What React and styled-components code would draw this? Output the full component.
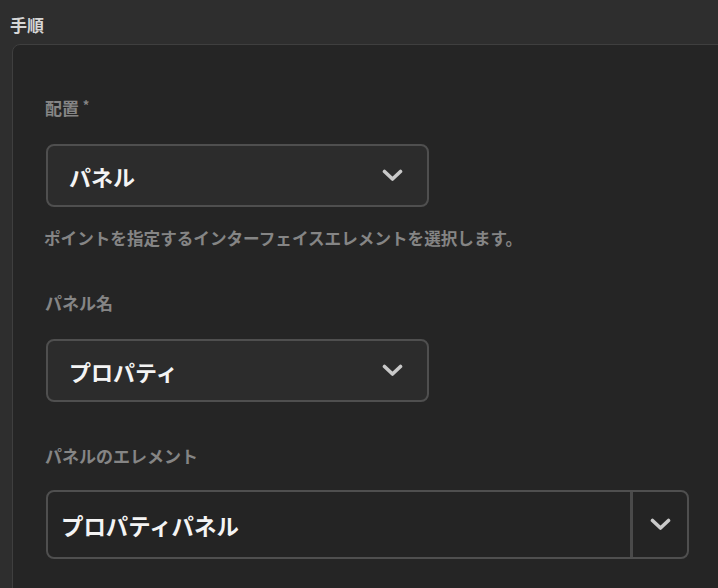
import React from 'react'
import styled, { createGlobalStyle } from 'styled-components'

const GlobalStyle = createGlobalStyle`
    html, body {
        margin: 0;
        padding: 0;
        background-color: #2e2e2e;
        overflow: hidden;
    }
    body {
        font-family: "Noto Sans CJK JP", "Noto Sans", sans-serif;
    }
`

function Chevron() {
    return (
        <svg width="21" height="13" viewBox="0 0 21 13">
            <polyline
                points="2.5,2.5 10.5,10 18.5,2.5"
                fill="none"
                stroke="#c9c9c9"
                strokeWidth="3.6"
                strokeLinecap="round"
                strokeLinejoin="round"
            />
        </svg>
    )
}

function App() {
    return (
        <StPage>
            <GlobalStyle />
            <StHeading>手順</StHeading>
            <StPanel>
                <StField>
                    <StLabel>配置 <StRequired>*</StRequired></StLabel>
                    <StSelect>
                        <StValue>パネル</StValue>
                        <Chevron />
                    </StSelect>
                    <StHelp>ポイントを指定するインターフェイスエレメントを選択します。</StHelp>
                </StField>
                <StField>
                    <StLabel>パネル名</StLabel>
                    <StSelect>
                        <StValue>プロパティ</StValue>
                        <Chevron />
                    </StSelect>
                </StField>
                <StField>
                    <StLabel>パネルのエレメント</StLabel>
                    <StCombo>
                        <StComboInput>プロパティパネル</StComboInput>
                        <StComboButton>
                            <Chevron />
                        </StComboButton>
                    </StCombo>
                </StField>
            </StPanel>
        </StPage>
    )
}

export default App

const StPage = styled.div`
    width: 718px;
    height: 588px;
    padding-top: 13px;
    box-sizing: border-box;
    overflow: hidden;
`

const StHeading = styled.div`
    margin-left: 10px;
    font-size: 17px;
    line-height: 24px;
    font-weight: 700;
    color: #d6d6d6;
`

const StPanel = styled.div`
    margin-top: 7px;
    margin-left: 12px;
    width: 760px;
    height: 600px;
    box-sizing: border-box;
    padding: 51px 0 0 33px;
    background-color: #252525;
    border: 1px solid #3f3f3f;
    border-radius: 8px;
    display: flex;
    flex-direction: column;
    gap: 42px;
`

const StField = styled.div`
    display: flex;
    flex-direction: column;
`

const StLabel = styled.div`
    margin-left: -1px;
    font-size: 17px;
    line-height: 24px;
    font-weight: 700;
    color: #858585;
    margin-bottom: 24px;
`

const StRequired = styled.span`
    font-size: 13px;
    vertical-align: top;
    line-height: 18px;
`

const StSelect = styled.div`
    width: 383px;
    height: 63px;
    box-sizing: border-box;
    display: flex;
    align-items: center;
    justify-content: space-between;
    padding: 0 24px 0 21px;
    background-color: #2c2c2c;
    border: 2px solid #4f4f4f;
    border-radius: 8px;
`

const StValue = styled.div`
    font-size: 22px;
    font-weight: 700;
    color: #f4f4f4;
`

const StHelp = styled.div`
    margin-top: 20px;
    margin-left: -2px;
    font-size: 16.6px;
    line-height: 22px;
    font-weight: 700;
    color: #858585;
`

const StCombo = styled.div`
    width: 643px;
    height: 69px;
    box-sizing: border-box;
    display: flex;
    margin-top: -2px;
    background-color: #242424;
    border: 2px solid #4f4f4f;
    border-radius: 8px;
`

const StComboInput = styled.div`
    flex: 1;
    display: flex;
    align-items: center;
    padding-left: 13px;
    font-size: 22.4px;
    font-weight: 700;
    color: #f4f4f4;
    border-right: 3px solid #4a4a4a;
`

const StComboButton = styled.div`
    width: 54px;
    display: flex;
    align-items: center;
    justify-content: center;
`
